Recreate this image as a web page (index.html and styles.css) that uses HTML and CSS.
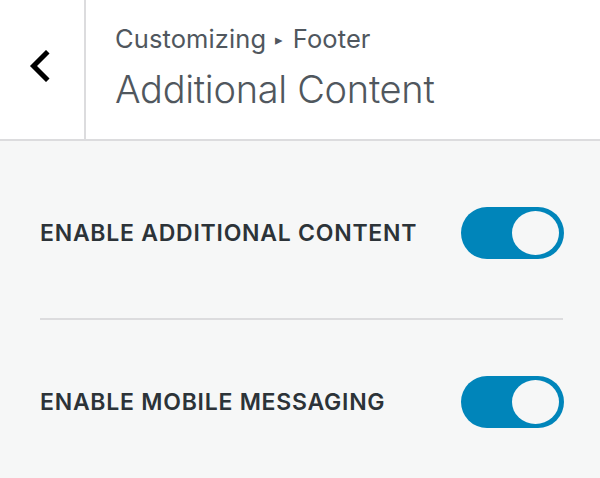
FILE: index.html
```html
<!DOCTYPE html>
<html>
<head>
<meta charset="utf-8">
<link rel="stylesheet" href="styles.css">
</head>
<body>
<header class="header">
  <div class="back">
    <svg width="22" height="32" viewBox="0 0 22 32" class="chevron">
      <path d="M18 3.5 L5.5 16 L18 28.5" fill="none" stroke="#000" stroke-width="5" stroke-linecap="square" stroke-linejoin="miter"/>
    </svg>
  </div>
  <div class="titles">
    <div class="crumb">Customizing <span class="tri">▸</span> Footer</div>
    <div class="title">Additional Content</div>
  </div>
</header>
<main class="content">
  <div class="row first">
    <span class="label">ENABLE ADDITIONAL CONTENT</span>
    <span class="toggle"><span class="knob"></span></span>
  </div>
  <div class="sep"></div>
  <div class="row second">
    <span class="label">ENABLE MOBILE MESSAGING</span>
    <span class="toggle"><span class="knob"></span></span>
  </div>
</main>
</body>
</html>
```
FILE: styles.css
```css
html, body {
  margin: 0;
  padding: 0;
}
body {
  background: #f6f7f7;
  font-family: Inter, "Liberation Sans", sans-serif;
  width: 600px;
  height: 478px;
  overflow: hidden;
}
.header {
  display: flex;
  height: 139px;
  background: #fff;
  border-bottom: 2px solid #dcdcde;
}
.back {
  width: 86px;
  border-right: 2px solid #dcdcde;
  display: flex;
  align-items: center;
  justify-content: center;
  padding-bottom: 7px;
  box-sizing: border-box;
}
.chevron {
  display: block;
  margin-left: -6px;
}
.titles {
  padding-left: 29px;
  padding-top: 24px;
  color: #50575e;
}
.crumb {
  font-size: 25.5px;
  line-height: 30px;
  letter-spacing: 0.1px;
}
.tri {
  font-size: 15px;
  vertical-align: 3px;
  margin: 0 2px;
}
.title {
  font-size: 38px;
  font-weight: 300;
  line-height: 44px;
  margin-top: 12px;
  letter-spacing: -0.3px;
}
.content {
  padding: 0 36px 0 40px;
}
.row {
  display: flex;
  align-items: center;
  justify-content: space-between;
}
.row.first {
  padding-top: 66px;
  padding-bottom: 59px;
}
.row.second {
  padding-top: 56px;
}
.label {
  font-size: 23px;
  font-weight: 600;
  color: #2c3338;
  letter-spacing: 0.75px;
}
.sep {
  height: 2px;
  background: #dcdcde;
  margin-right: 1px;
}
.toggle {
  position: relative;
  width: 103px;
  height: 52px;
  border-radius: 26px;
  background: #0085ba;
  display: block;
}
.knob {
  position: absolute;
  right: 5px;
  top: 4px;
  width: 47px;
  height: 44px;
  border-radius: 50%;
  background: #f6f7f7;
}
```
